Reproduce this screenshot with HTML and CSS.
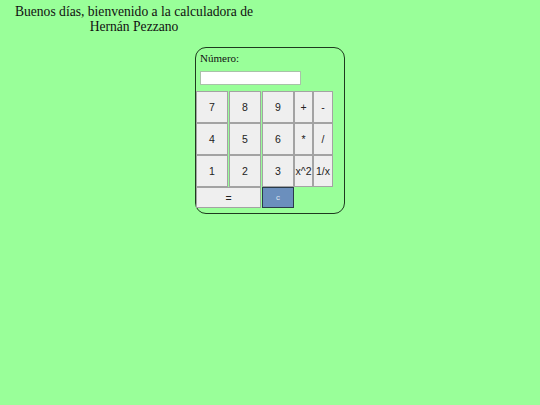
FILE: index.html
```html
<!DOCTYPE html>
<html lang="es">
<head>
<meta charset="utf-8">
<title>Calculadora</title>
<link rel="stylesheet" href="styles.css">
</head>
<body>
<h1 class="title">Buenos días, bienvenido a la calculadora de Hernán Pezzano</h1>
<div class="calc">
  <label class="label" for="num">Número:</label>
  <input class="display" id="num" type="text">
  <div class="keys">
    <button class="key">7</button>
    <button class="key">8</button>
    <button class="key wide">9</button>
    <button class="key op">+</button>
    <button class="key op">-</button>
    <button class="key">4</button>
    <button class="key">5</button>
    <button class="key wide">6</button>
    <button class="key op">*</button>
    <button class="key op">/</button>
    <button class="key">1</button>
    <button class="key">2</button>
    <button class="key wide">3</button>
    <button class="key op">x^2</button>
    <button class="key op">1/x</button>
    <button class="key equals">=</button>
    <button class="key clear">c</button>
  </div>
</div>
</body>
</html>
```
FILE: styles.css
```css
html, body {
  margin: 0;
  padding: 0;
  background: #99ff99;
}
body {
  font-family: "Liberation Serif", serif;
  color: #111;
}
.title {
  width: 252px;
  margin: 0 0 0 8px;
  padding-top: 4px;
  text-align: center;
  font-size: 13.6px;
  line-height: 15px;
  font-weight: normal;
}
.calc {
  width: 148px;
  height: 165px;
  margin: 13px auto 0;
  border: 1px solid #1e3a1e;
  border-radius: 11px;
  display: flex;
  flex-direction: column;
}
.label {
  padding: 4px 0 0 4px;
  font-size: 11px;
  line-height: 13px;
}
.display {
  box-sizing: border-box;
  width: 101px;
  height: 14px;
  margin: 6px 0 0 4px;
  padding: 0;
  border: 1px solid #a9c2a9;
  background: #fff;
}
.keys {
  margin-top: 6px;
  display: grid;
  grid-template-columns: 33px 33px 32px 19px 20px;
  grid-template-rows: 32px 32px 32px 21px;
}
.key {
  box-sizing: border-box;
  width: 32px;
  height: 100%;
  margin: 0;
  padding: 0;
  border: 1px solid #a3a3a3;
  background: #efefef;
  font-family: "Liberation Sans", Arial, sans-serif;
  font-size: 10.5px;
  color: #222;
}
.key.op {
  width: 100%;
}
.key.equals {
  grid-column: span 2;
  width: 65px;
}
.key.clear {
  width: 32px;
  height: 21px;
  background: #6b8fbd;
  border: 1px solid #2a3b4a;
  color: #dde6f0;
  font-size: 8px;
}
```
